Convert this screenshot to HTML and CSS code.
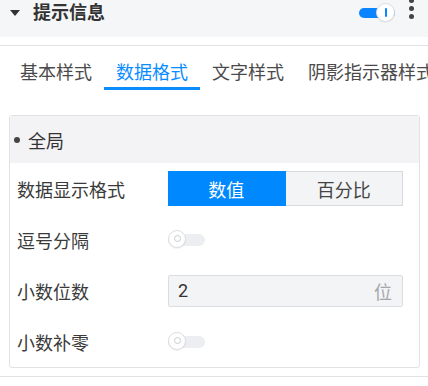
FILE: index.html
```html
<!DOCTYPE html>
<html>
	<head>
		<title>提示信息</title>
		<link rel="stylesheet" href="styles.css">
	</head>
	<body>
		<div class="head">
			<span class="caret"></span>
			<span class="head-title">提示信息</span>
			<span class="switch on"><span class="knob"></span></span>
			<span class="more"><i></i><i></i><i></i></span>
		</div>
		<div class="tabs">
			<span class="tab">基本样式</span>
			<span class="tab active">数据格式</span>
			<span class="tab">文字样式</span>
			<span class="tab">阴影指示器样式</span>
		</div>
		<div class="panel">
			<div class="panel-head"><span class="dot"></span>全局</div>
			<div class="row">
				<span class="label">数据显示格式</span>
				<div class="seg">
					<span class="seg-item selected">数值</span>
					<span class="seg-item">百分比</span>
				</div>
			</div>
			<div class="row">
				<span class="label">逗号分隔</span>
				<span class="switch"><span class="knob"></span></span>
			</div>
			<div class="row">
				<span class="label">小数位数</span>
				<div class="input">
					<span>2</span>
					<span class="unit">位</span>
				</div>
			</div>
			<div class="row">
				<span class="label">小数补零</span>
				<span class="switch"><span class="knob"></span></span>
			</div>
		</div>
		<div class="bottom-line"></div>
	</body>
</html>
```

FILE: styles.css
```css
body {
	margin: 0;
	font-family: Roboto, "Noto Sans CJK SC", sans-serif;
	color: #333333;
	background: #ffffff;
	overflow: hidden;
}

.head {
	height: 37px;
	background: #f5f6f8;
	display: flex;
	align-items: center;
	padding: 0 14px 12px 10px;
	box-sizing: border-box;
	border-bottom: 8px solid #ffffff;
	height: 45px;
	box-shadow: 0 1px 0 #e1e2e6;
}

.caret {
	width: 0;
	height: 0;
	border-left: 5.5px solid transparent;
	border-right: 5.5px solid transparent;
	border-top: 6px solid #333333;
	margin-right: 13px;
}

.head-title {
	font-size: 18px;
	font-weight: bold;
	line-height: 24px;
}

.switch {
	position: relative;
	display: inline-block;
	width: 37px;
	height: 12px;
	border-radius: 6px;
	background: #eceef2;
}

.switch .knob {
	position: absolute;
	left: 0;
	top: -4px;
	width: 18px;
	height: 18px;
	box-sizing: border-box;
	border-radius: 50%;
	background: #ffffff;
	border: 1px solid #dcdee3;
	box-shadow: 0 1px 1px rgba(0, 0, 0, 0.06);
}

.switch .knob::after {
	content: "";
	position: absolute;
	left: 4.5px;
	top: 4.5px;
	width: 7px;
	height: 7px;
	box-sizing: border-box;
	border-radius: 50%;
	border: 1.5px solid #c9cbd0;
}

.switch.on {
	margin-left: auto;
	width: 36px;
	height: 10px;
	background: #0a84ff;
}

.switch.on .knob {
	left: 17px;
	top: -5px;
	width: 19px;
	height: 19px;
}

.switch.on .knob::after {
	left: 7.5px;
	top: 4px;
	width: 2px;
	height: 9px;
	border: 0;
	border-radius: 1px;
	background: #0a84ff;
}

.more {
	display: flex;
	flex-direction: column;
	gap: 3px;
	margin-left: 14px;
	margin-top: -8px;
}

.more i {
	width: 5px;
	height: 5px;
	border-radius: 50%;
	background: #444444;
}

.tabs {
	display: flex;
	padding-left: 8px;
	margin-top: 1px;
	white-space: nowrap;
}

.tab {
	font-size: 18px;
	line-height: 26px;
	padding: 14px 12px 1px;
	color: #4a4a4a;
	border-bottom: 3px solid transparent;
}

.tab.active {
	color: #0a8cff;
	border-bottom-color: #0a8cff;
}

.panel {
	margin: 25px 0 0 9px;
	width: 411px;
	box-sizing: border-box;
	border: 1px solid #e1e2e6;
	border-radius: 3px;
}

.panel-head {
	height: 47px;
	background: #f3f3f6;
	display: flex;
	align-items: center;
	padding-left: 4px;
	font-size: 18px;
}

.dot {
	width: 6px;
	height: 6px;
	border-radius: 50%;
	background: #444444;
	margin-right: 8px;
}

.row {
	height: 51px;
	display: flex;
	align-items: center;
	padding-left: 7px;
}

.label {
	width: 151px;
	font-size: 18px;
	color: #3a3a3a;
}

.seg {
	display: flex;
	width: 235px;
	height: 35px;
	font-size: 18px;
}

.seg-item {
	flex: 1;
	display: flex;
	align-items: center;
	justify-content: center;
	background: #f3f4f6;
	border: 1px solid #d9dadf;
	border-left: 0;
	color: #444444;
}

.seg-item.selected {
	background: #0088ff;
	border-color: #0088ff;
	color: #ffffff;
}

.input {
	width: 235px;
	height: 32px;
	box-sizing: border-box;
	display: flex;
	align-items: center;
	justify-content: space-between;
	padding: 0 10px 0 9px;
	background: #f3f4f6;
	border: 1px solid #dcdde1;
	border-radius: 2px;
	font-size: 18px;
	color: #333333;
}

.unit {
	color: #a5a7ab;
}

.bottom-line {
	margin-top: 8px;
	border-top: 1px solid #e1e2e6;
}
```
